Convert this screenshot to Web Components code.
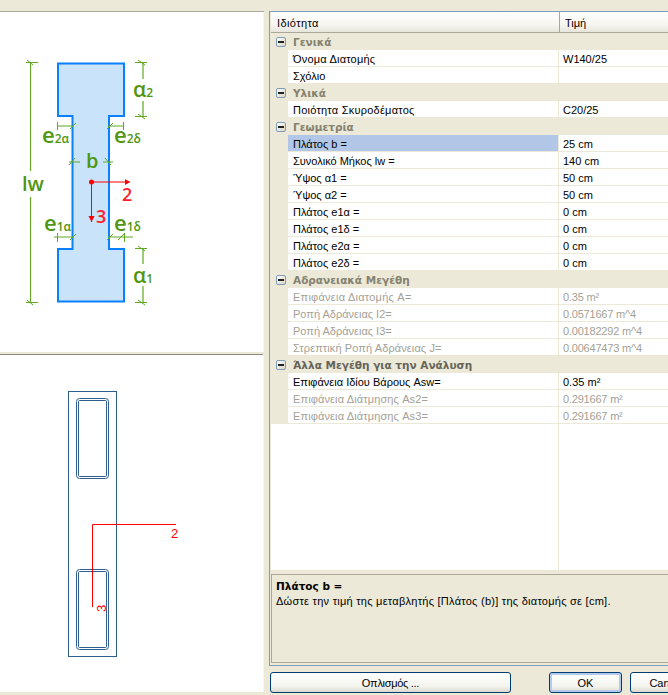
<!DOCTYPE html>
<html lang="el">
<head>
<meta charset="utf-8">
<title>Ιδιότητες Διατομής</title>
<style>
    html, body { margin: 0; background: #ece9d8; overflow: hidden; }
</style>
</head>
<body>
<section-dialog>
    <drawing-pane slot="top" size="340"><section-shape></section-shape></drawing-pane>
    <drawing-pane slot="bottom" size="337"><section-mesh></section-mesh></drawing-pane>

    <property-sheet slot="right" name-title="Ιδιότητα" value-title="Τιμή">
        <prop-group label="Γενικά">
            <prop-row value="W140/25" style="letter-spacing: .2px">Όνομα Διατομής</prop-row>
            <prop-row value="">Σχόλιο</prop-row>
        </prop-group>
        <prop-group label="Υλικά">
            <prop-row value="C20/25" style="letter-spacing: .24px">Ποιότητα Σκυροδέματος</prop-row>
        </prop-group>
        <prop-group label="Γεωμετρία">
            <prop-row value="25 cm" selected>Πλάτος b =</prop-row>
            <prop-row value="140 cm">Συνολικό Μήκος lw =</prop-row>
            <prop-row value="50 cm">Ύψος α1 =</prop-row>
            <prop-row value="50 cm">Ύψος α2 =</prop-row>
            <prop-row value="0 cm">Πλάτος e1α =</prop-row>
            <prop-row value="0 cm">Πλάτος e1δ =</prop-row>
            <prop-row value="0 cm">Πλάτος e2α =</prop-row>
            <prop-row value="0 cm">Πλάτος e2δ =</prop-row>
        </prop-group>
        <prop-group label="Αδρανειακά Μεγέθη">
            <prop-row value="0.35 m²" disabled style="letter-spacing: .24px">Επιφάνεια Διατομής A=</prop-row>
            <prop-row value="0.0571667 m^4" disabled>Ροπή Αδράνειας I2=</prop-row>
            <prop-row value="0.00182292 m^4" disabled>Ροπή Αδράνειας I3=</prop-row>
            <prop-row value="0.00647473 m^4" disabled style="letter-spacing: .1px">Στρεπτική Ροπή Αδράνειας J=</prop-row>
        </prop-group>
        <prop-group label="Άλλα Μεγέθη για την Ανάλυση" strong>
            <prop-row value="0.35 m²">Επιφάνεια Ιδίου Βάρους Asw=</prop-row>
            <prop-row value="0.291667 m²" disabled style="letter-spacing: .12px">Επιφάνεια Διάτμησης As2=</prop-row>
            <prop-row value="0.291667 m²" disabled style="letter-spacing: .12px">Επιφάνεια Διάτμησης As3=</prop-row>
        </prop-group>
        <help-box slot="help" title-text="Πλάτος b =">Δώστε την τιμή της μεταβλητής [Πλάτος (b)] της διατομής σε [cm].</help-box>
    </property-sheet>

    <xp-button slot="actions" width="241" style="letter-spacing: -.3px">Οπλισμός ...</xp-button>
    <xp-button slot="actions" width="73" default style="margin-left: 38px">OK</xp-button>
    <xp-button slot="actions" width="73" style="margin-left: 8px">Cancel</xp-button>
</section-dialog>

<script>
const FONT = `"Liberation Sans", Arial, sans-serif`;

function define(tag, html, setup) {
    let template = document.createElement("template");
    template.innerHTML = html;
    customElements.define(tag, class extends HTMLElement {
        constructor() {
            super();
            this.attachShadow({mode: "open"}).append(template.content.cloneNode(true));
        }
        connectedCallback() {
            if (setup) setup(this, this.shadowRoot);
        }
    });
}

define("section-dialog", /*html*/`
    <style>
        :host {
            display: grid;
            grid-template-columns: 264px 1fr;
            column-gap: 5px;
            box-sizing: border-box;
            width: 668px;
            height: 695px;
            overflow: hidden;
            padding-top: 11px;
            background: #ece9d8;
            font: 11px ${FONT};
        }
        .left {
            display: flex;
            flex-direction: column;
            border-top: 1px solid #aca899;
            height: 681px;
        }
        .splitter {
            flex: none;
            height: 3px;
            width: 263px;
            box-sizing: border-box;
            background: #ece9d8;
            border-bottom: 1px solid #8f8c7e;
        }
        .right {
            display: flex;
            flex-direction: column;
            width: 460px;
        }
        .actions {
            display: flex;
            margin: 6px 0 0 1px;
        }
    </style>
    <div class="left">
        <slot name="top"></slot>
        <div class="splitter"></div>
        <slot name="bottom"></slot>
    </div>
    <div class="right">
        <slot name="right"></slot>
        <div class="actions"><slot name="actions"></slot></div>
    </div>
`);

define("drawing-pane", /*html*/`
    <style>
        :host {
            display: block;
            flex: none;
            background: #fff;
            border-right: 1px solid #f6f5ef;
            overflow: hidden;
        }
    </style>
    <slot></slot>
`, (el) => {
    el.style.height = el.getAttribute("size") + "px";
});

define("section-shape", /*html*/`
    <style>
        :host { display: block; }
        svg { display: block; }
        text { font-family: "Open Sans", ${FONT}; font-weight: 600; fill: #4f9612; }
        .dim { stroke: #5fa822; stroke-width: 1; fill: none; }
        .soft { stroke: #9ccb7c; stroke-width: 2; fill: none; }
        .red { stroke: #f00; stroke-width: 1; fill: none; }
        .r { fill: #ff1f2f; font-size: 18px; }
    </style>
    <svg width="263" height="340" viewBox="0 12 263 340">
        <path d="M58 63.500H124V116H109V249H124V301.500H58V249H72.500V116H58Z" fill="#c9e3fb" stroke="#0a80ff" stroke-width="2"/>

        <path class="dim" d="M30.500 63V171M30.500 197V302M26 62.500H38M27 60L33 65M26 302.500H38M27 300L33 305"/>
        <text x="22" y="191" font-size="20">lw</text>

        <path class="soft" d="M143 63V79M143 101V117M143 248V264M143 286V302"/>
        <path class="dim" d="M135 62.500H147M138 60L145 65M135 116.500H147M138 114L145 119M135 248.500H147M138 246L145 251M135 302.500H147M138 300L145 305"/>
        <text x="133" y="97" font-size="21">α<tspan font-size="12">2</tspan></text>
        <text x="133" y="283" font-size="21">α<tspan font-size="12">1</tspan></text>

        <path class="dim" d="M57.500 126H73M57.500 122V130M70 129L76 123M108 126H124M123.500 122V130M107 129L113 123"/>
        <text x="42" y="143" font-size="22">e<tspan font-size="12">2α</tspan></text>
        <text x="114" y="143" font-size="22">e<tspan font-size="12">2δ</tspan></text>

        <path class="dim" d="M69 162H80M69 165L75 158M103 162H113M105 158L111 165"/>
        <text x="86" y="168" font-size="20">b</text>

        <path class="dim" d="M54 237H73M57.500 233V242M70 240L76 234M108 237H133M124.500 233V242M107 240L113 234M118 240L124 234"/>
        <text x="44" y="231" font-size="22">e<tspan font-size="12">1α</tspan></text>
        <text x="114" y="231" font-size="22">e<tspan font-size="12">1δ</tspan></text>

        <path class="red" d="M91.500 182H130M91.500 182V222"/>
        <circle cx="91.500" cy="182" r="2.500" fill="#f00"/>
        <path d="M125 179V185L130 182ZM88.500 216H94.500L91.500 222Z" fill="#f00"/>
        <text class="r" x="122" y="201">2</text>
        <text class="r" x="96" y="223">3</text>
    </svg>
`);

define("section-mesh", /*html*/`
    <style>
        :host { display: block; }
        svg { display: block; }
        rect { fill: none; stroke: #2f5f8f; stroke-width: 1; }
        text { font-family: ${FONT}; font-size: 13px; fill: #f00; }
    </style>
    <svg width="263" height="337" viewBox="0 355 263 337">
        <rect x="68.500" y="391.500" width="48" height="265"/>
        <rect x="76.500" y="398.500" width="32" height="80" rx="3"/>
        <rect x="78.500" y="400.500" width="28" height="76" rx="1"/>
        <rect x="76.500" y="569.500" width="32" height="80" rx="3"/>
        <rect x="78.500" y="571.500" width="28" height="76" rx="1"/>
        <path d="M176 524.500H92.500V607" fill="none" stroke="#f00"/>
        <text x="171" y="538">2</text>
        <text transform="translate(106 612) rotate(-90)">3</text>
    </svg>
`);

define("property-sheet", /*html*/`
    <style>
        :host {
            display: flex;
            flex-direction: column;
            box-sizing: border-box;
            height: 655px;
            border: 1px solid #7f9db9;
            padding: 0 0 2px 1px;
            background: #ece9d8;
            color: #000;
        }
        .head {
            display: grid;
            grid-template-columns: 288px 1fr;
            height: 21px;
            flex: none;
            box-sizing: border-box;
            background: linear-gradient(#fff, #f7f6f1 60%, #e8e6dc);
            border-bottom: 1px solid #aca899;
            line-height: 22px;
        }
        .head span { padding-left: 6px; }
        .head .name { letter-spacing: .4px; }
        .head span + span { border-left: 1px solid #aca899; padding-left: 5px; }
        .grid {
            flex: 1;
            display: flex;
            flex-direction: column;
            margin-bottom: 4px;
            background:
                linear-gradient(#ece9d8, #ece9d8) 287px 0 / 1px 100% no-repeat,
                #fff;
            min-height: 0;
        }
        .help { flex: none; }
    </style>
    <div class="head"><span class="name"></span><span class="value"></span></div>
    <div class="grid"><slot></slot></div>
    <div class="help"><slot name="help"></slot></div>
`, (el, root) => {
    root.querySelector(".name").textContent = el.getAttribute("name-title");
    root.querySelector(".value").textContent = el.getAttribute("value-title");
});

define("prop-group", /*html*/`
    <style>
        :host { display: block; }
        .band {
            display: flex;
            align-items: center;
            height: 17px;
            background: #ece9d8;
            color: #85826f;
            font: bold 10.5px "DejaVu Sans", ${FONT};
        }
        :host([strong]) .band { color: #666459; }
        .label { padding-top: 1px; }
        .toggle {
            box-sizing: border-box;
            width: 10px;
            height: 10px;
            margin: 0 7px 0 5px;
            border: 1px solid #7f9db9;
            border-radius: 2px;
            background: linear-gradient(135deg, #fff, #d8d3c4);
            display: flex;
            align-items: center;
            justify-content: center;
        }
        .toggle i { display: block; width: 6px; height: 2px; background: #222; }
    </style>
    <div class="band"><span class="toggle"><i></i></span><span class="label"></span></div>
    <slot></slot>
`, (el, root) => {
    root.querySelector(".label").textContent = el.getAttribute("label");
});

define("prop-row", /*html*/`
    <style>
        :host {
            display: grid;
            grid-template-columns: 17px 270px 1fr;
            height: 17px;
            line-height: 18px;
            color: #000;
        }
        :host([disabled]) { color: #a3a196; }
        .gutter { background: #ece9d8; }
        .name, .value {
            background: #fff;
            border-bottom: 1px solid #ece9d8;
            height: 16px;
            white-space: nowrap;
            overflow: hidden;
        }
        .name { padding-left: 5px; }
        .value { padding-left: 4px; border-left: 1px solid #ece9d8; letter-spacing: 0; }
        :host([disabled]) .value { letter-spacing: -.2px; }
        :host([selected]) .name { background: #b2c7e7; }
    </style>
    <div class="gutter"></div>
    <div class="name"><slot></slot></div>
    <div class="value"></div>
`, (el, root) => {
    root.querySelector(".value").textContent = el.getAttribute("value");
});

define("help-box", /*html*/`
    <style>
        :host {
            display: block;
            box-sizing: border-box;
            height: 89px;
            padding: 4px 4px;
            border: 1px solid #aca899;
            border-width: 1px 0 1px 1px;
            background: #ece9d8;
            line-height: 15px;
            letter-spacing: .26px;
        }
        b { display: block; font: bold 10.5px/15px "DejaVu Sans", ${FONT}; letter-spacing: 0; }
    </style>
    <b></b>
    <slot></slot>
`, (el, root) => {
    root.querySelector("b").textContent = el.getAttribute("title-text");
});

define("xp-button", /*html*/`
    <style>
        :host {
            display: flex;
            flex: none;
            align-items: center;
            justify-content: center;
            box-sizing: border-box;
            height: 21px;
            border: 1px solid #003c74;
            border-radius: 3px;
            background: linear-gradient(#fff, #f4f4ee 70%, #dcd8ce);
            color: #000;
            white-space: nowrap;
        }
        :host([default]) { box-shadow: inset 0 0 0 2px #b4c9ee; }
    </style>
    <slot></slot>
`, (el) => {
    el.style.width = el.getAttribute("width") + "px";
});
</script>
</body>
</html>
